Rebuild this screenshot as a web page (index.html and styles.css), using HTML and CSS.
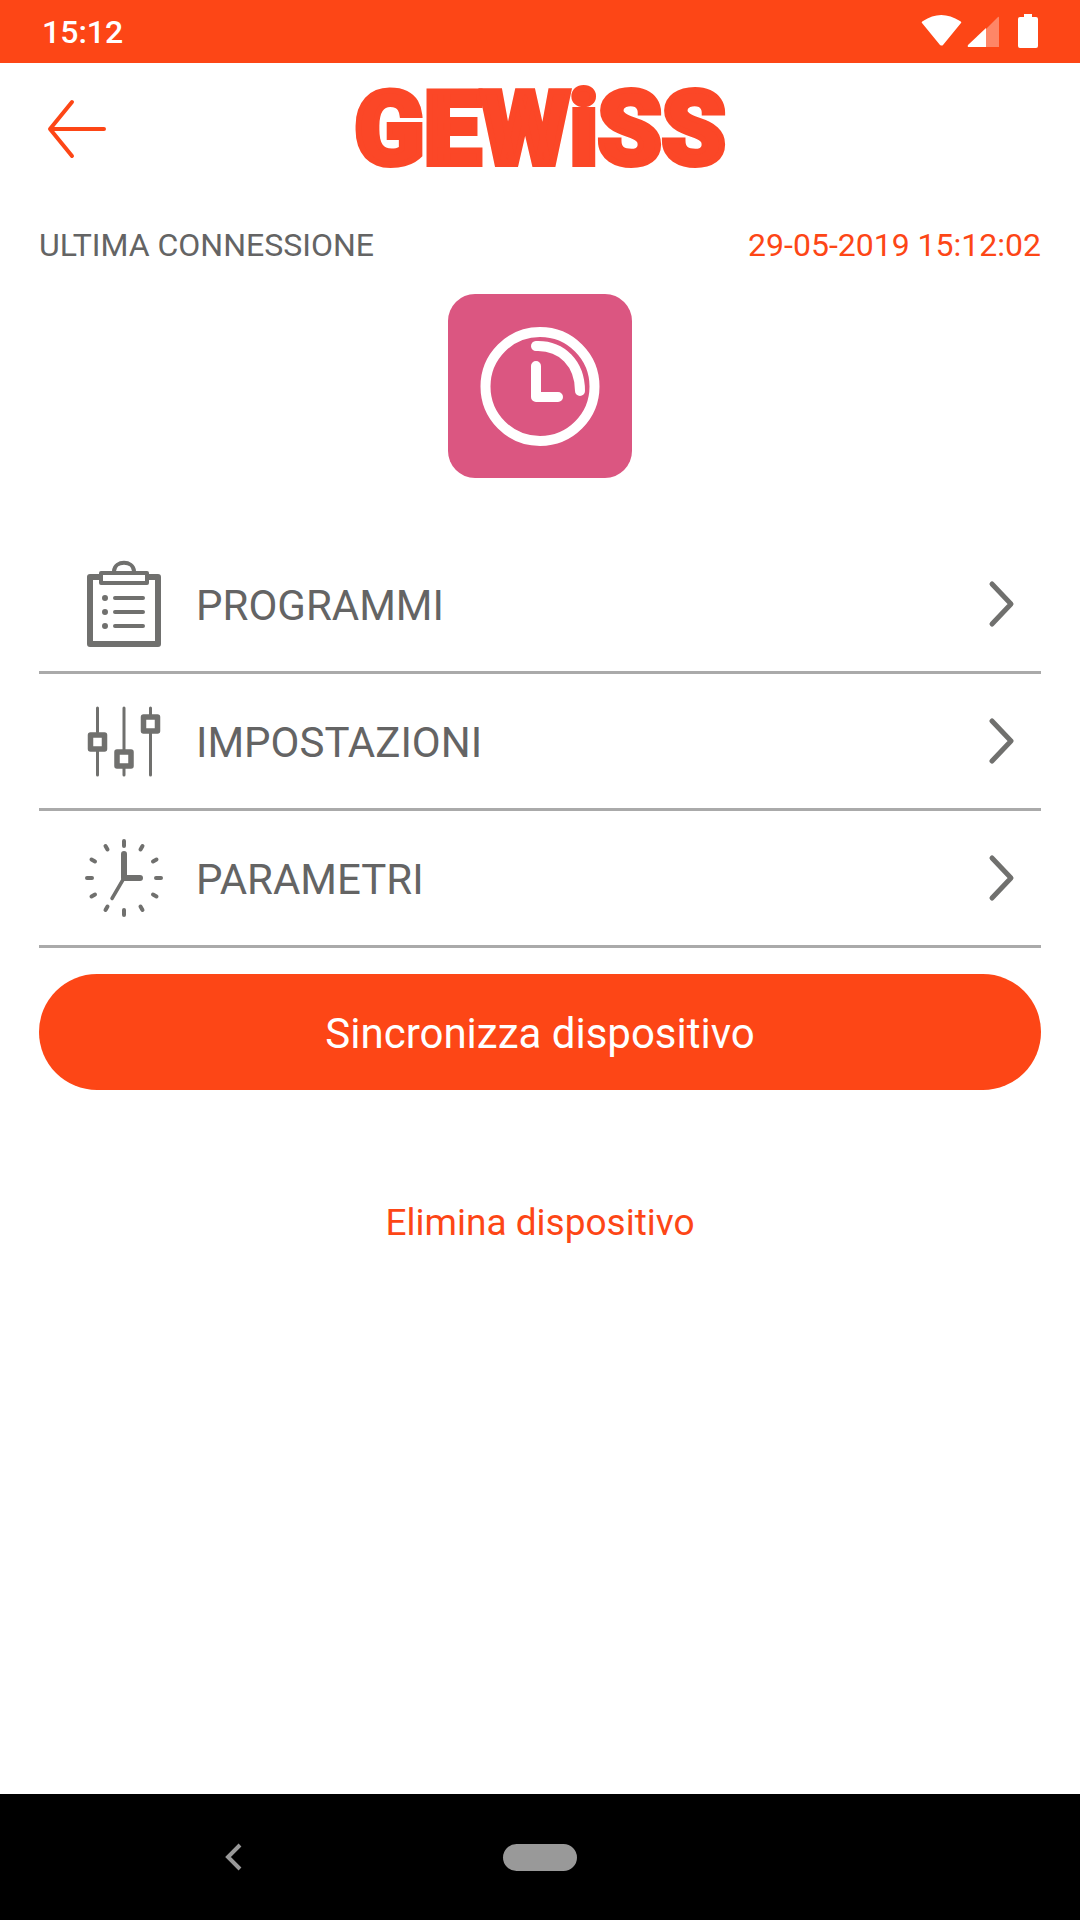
FILE: index.html
```html
<!DOCTYPE html>
<html lang="it">
<head>
    <meta charset="UTF-8">
    <meta name="viewport" content="width=device-width, initial-scale=1.0">
    <title>Gewiss</title>
    <link rel="stylesheet" href="styles.css">
</head>
<body>
    <div class="status-bar">
        <span class="time">15:12</span>
        <svg class="status-icons" width="118" height="36" viewBox="0 0 118 36" fill="#fff">
            <path d="M1 9Q0 8 2 7Q20-5 39 7Q41 8 40 9L22 31Q21 32 19 31Z"/>
            <path d="M47 33L77 3Q78 2 78 4V33Z" opacity="0.35"/>
            <path d="M65 14V33H48Q46 33 47 31Z"/>
            <path d="M103 0H111V3H115Q117 3 117 5V32Q117 34 115 34H99Q97 34 97 32V5Q97 3 99 3H103Z"/>
        </svg>
    </div>

    <header class="header">
        <button class="back" aria-label="Indietro">
            <svg width="60" height="60" viewBox="0 0 60 60">
                <path d="M25 3L3 30L25 57M4 30H57"/>
            </svg>
        </button>
        <div class="logo">GEWiSS</div>
    </header>

    <main class="content">
        <div class="connection">
            <span>ULTIMA CONNESSIONE</span>
            <span class="date">29-05-2019 15:12:02</span>
        </div>

        <div class="device">
            <svg width="184" height="184" viewBox="0 0 184 184">
                <circle cx="92" cy="92.500" r="54.500"/>
                <path d="M88 52C114 51 132 70 132 97M88 72V103H110"/>
            </svg>
        </div>

        <nav class="menu">
            <a class="menu-item" href="#programmi">
                <svg class="menu-icon" width="84" height="90" viewBox="0 0 84 90">
                    <rect x="8" y="18" width="68" height="67" stroke-width="6"/>
                    <rect class="clip" x="19" y="14" width="46" height="10"/>
                    <path d="M32 12C33 1 51 1 52 12M33 39H61M33 53H61M33 67H61"/>
                    <path d="M23 39V39.1M23 53V53.1M23 67V67.1" stroke-width="6"/>
                </svg>
                <span class="label">PROGRAMMI</span>
                <svg class="chevron" width="30" height="50" viewBox="0 0 30 50">
                    <path d="M5 5L24 25L5 45"/>
                </svg>
            </a>
            <a class="menu-item" href="#impostazioni">
                <svg class="menu-icon sliders" width="84" height="90" viewBox="0 0 84 90">
                    <path d="M15.5 12V36M15.5 54V79M42 12V54M42 71V79M68.5 12V19M68.5 36V79"/>
                    <path d="M8.500 39H22.500V53H8.500ZM35 56H49V70H35ZM61.500 21H75.500V35H61.500Z" stroke-width="5.500"/>
                </svg>
                <span class="label">IMPOSTAZIONI</span>
                <svg class="chevron" width="30" height="50" viewBox="0 0 30 50">
                    <path d="M5 5L24 25L5 45"/>
                </svg>
            </a>
            <a class="menu-item" href="#parametri">
                <svg class="menu-icon" width="84" height="90" viewBox="0 0 84 90">
                    <path d="M42 8V13M42 77V82M5 45H10M74 45H79"/>
                    <path d="M23.500 13L25.500 16.500M60.500 13L58.500 16.500M9.500 26.500L13 28.500M74.500 26.500L71 28.500M9.500 63.500L13 61.500M74.500 63.500L71 61.500M23.500 77L25.500 73.500M60.500 77L58.500 73.500"/>
                    <path d="M42 45L30 65.500" stroke-width="3.500"/>
                    <path d="M42 21V45H58" stroke-width="6"/>
                </svg>
                <span class="label">PARAMETRI</span>
                <svg class="chevron" width="30" height="50" viewBox="0 0 30 50">
                    <path d="M5 5L24 25L5 45"/>
                </svg>
            </a>
        </nav>

        <button class="sync">Sincronizza dispositivo</button>
        <button class="delete">Elimina dispositivo</button>
    </main>

    <footer class="nav-bar">
        <button class="nav-back" aria-label="Back">
            <svg width="18" height="28" viewBox="0 0 18 28">
                <path d="M15 2L3 14L15 26"/>
            </svg>
        </button>
        <button class="nav-home" aria-label="Home"></button>
        <span></span>
    </footer>
</body>
</html>
```
FILE: styles.css
```css
/* Reset and global styles */
* {
    margin: 0;
    padding: 0;
    box-sizing: border-box;
}

body {
    font-family: Roboto, sans-serif;
    background-color: #fff;
    color: #646464;
    display: flex;
    flex-direction: column;
    min-height: 100vh;
}

svg {
    display: block;
    flex-shrink: 0;
}

button {
    border: none;
    background: none;
    font-family: inherit;
    cursor: pointer;
}

/* Status bar */
.status-bar {
    display: flex;
    justify-content: space-between;
    align-items: center;
    height: 63px;
    padding: 0 41px 0 42px;
    background-color: #fd4616;
    color: #fff;
}

.time {
    font-size: 32px;
    font-weight: 500;
}

/* Header with back arrow and logo */
.header {
    display: grid;
    grid-template-columns: 1fr auto 1fr;
    align-items: center;
    height: 131px;
    padding: 0 47px;
}

.back {
    width: 60px;
}

.back path {
    fill: none;
    stroke: #fd4616;
    stroke-width: 4;
    stroke-linecap: round;
    stroke-linejoin: round;
}

.logo {
    color: #fb4727;
    font-size: 102px;
    line-height: 102px;
    font-weight: 900;
    -webkit-text-stroke: 6px #fb4727;
}

/* Main content */
.content {
    flex: 1;
    display: flex;
    flex-direction: column;
    padding: 32px 39px;
}

.connection {
    display: flex;
    justify-content: space-between;
    font-size: 32px;
    line-height: 38px;
}

.date {
    color: #fd4616;
}

.device {
    align-self: center;
    margin: 30px 0 59px;
    border-radius: 27px;
    background-color: #db5681;
}

.device svg {
    fill: none;
    stroke: #fff;
    stroke-width: 10;
    stroke-linecap: round;
    stroke-linejoin: round;
}

/* Menu */
.menu-item {
    display: flex;
    align-items: center;
    height: 137px;
    padding: 0 24px 0 43px;
    border-bottom: 3px solid #aaa;
    color: inherit;
    text-decoration: none;
}

.menu-icon,
.chevron {
    fill: none;
    stroke: #70706e;
    stroke-width: 4;
    stroke-linecap: round;
    stroke-linejoin: round;
}

.sliders {
    stroke-width: 3;
}

.clip {
    fill: #fff;
}

.label {
    flex: 1;
    padding: 2px 0 0 30px;
    font-size: 42px;
}

.chevron {
    stroke-width: 5;
}

/* Buttons */
.sync {
    height: 116px;
    margin-top: 26px;
    padding-top: 2px;
    border-radius: 58px;
    background-color: #fd4616;
    color: #fff;
    font-size: 42px;
}

.delete {
    align-self: center;
    margin-top: 110px;
    color: #fd4616;
    font-size: 37px;
    line-height: 46px;
}

/* Navigation bar */
.nav-bar {
    display: grid;
    grid-template-columns: 1fr auto 1fr;
    align-items: center;
    height: 126px;
    padding: 0 36px;
    background-color: #000;
}

.nav-back {
    justify-self: center;
    padding-right: 72px;
}

.nav-back path {
    fill: none;
    stroke: #999;
    stroke-width: 4;
}

.nav-home {
    width: 74px;
    height: 27px;
    border-radius: 14px;
    background-color: #999;
}
```
